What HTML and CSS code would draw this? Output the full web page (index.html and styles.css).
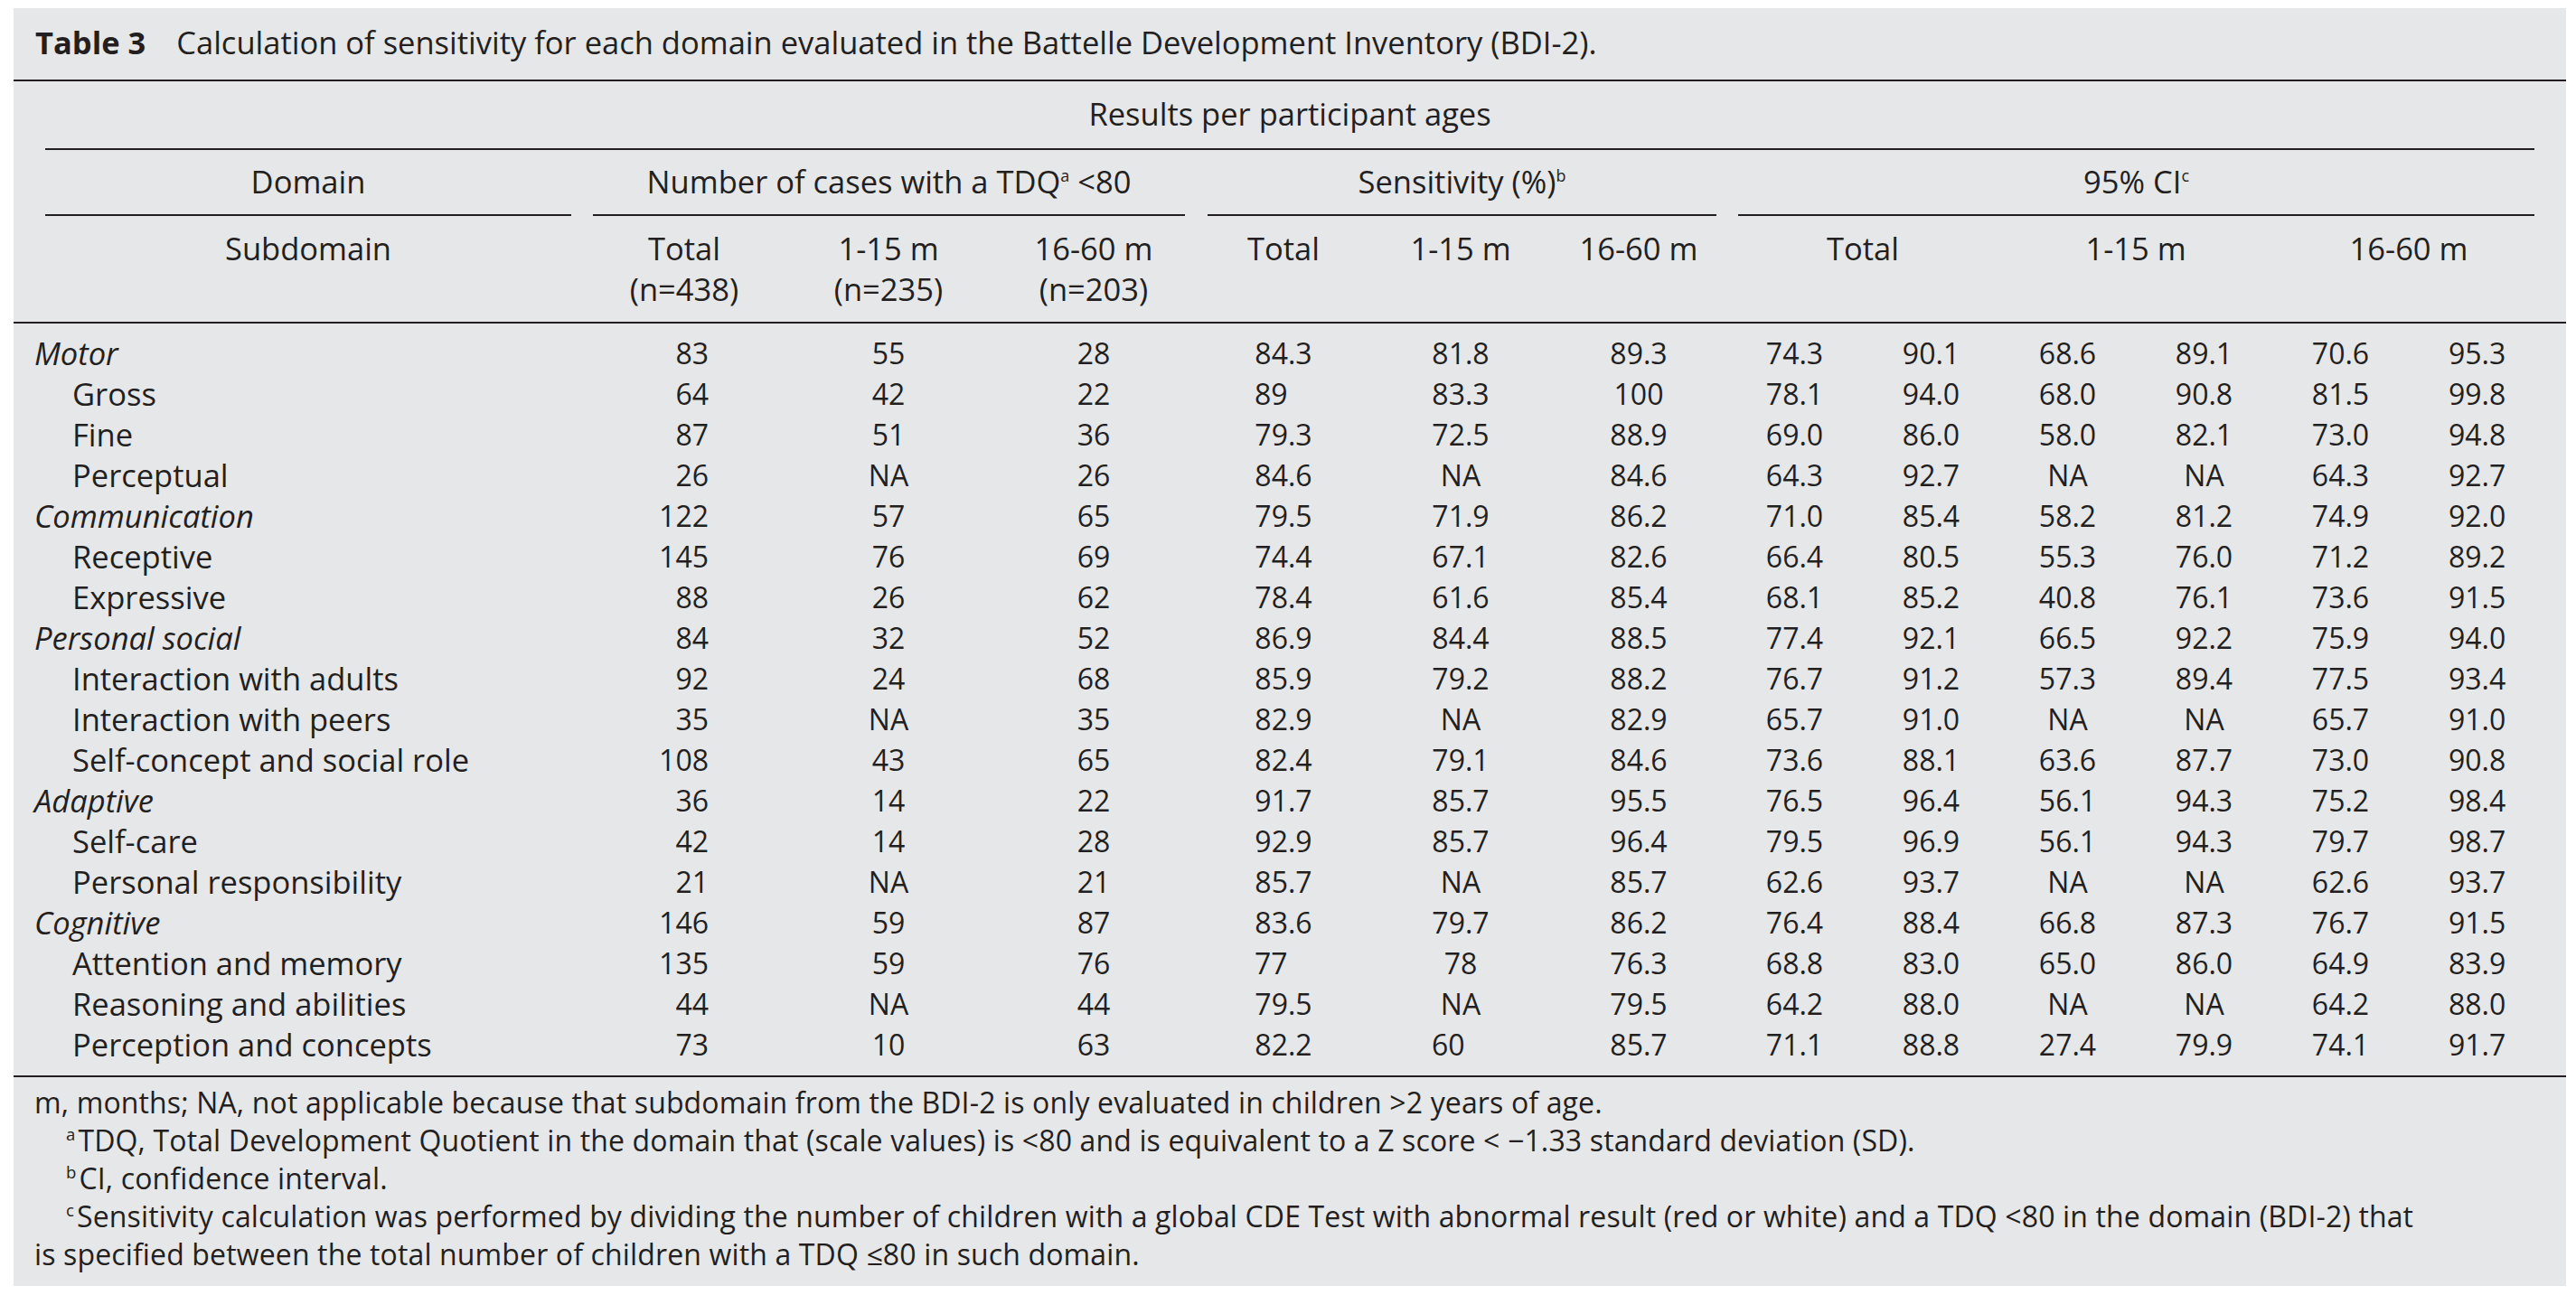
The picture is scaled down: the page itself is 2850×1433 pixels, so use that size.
FILE: index.html
```html
<!DOCTYPE html>
<html lang="en">
<head>
<meta charset="utf-8">
<title>Table 3</title>
<link rel="stylesheet" href="styles.css">
</head>
<body>
<div class="panel">
  <div class="caption"><span class="tlabel">Table 3</span><span class="ttext">Calculation of sensitivity for each domain evaluated in the Battelle Development Inventory (BDI-2).</span></div>
  <table class="tbl">
    <colgroup>
      <col class="w-dom"><col class="w-n1"><col class="w-n2"><col class="w-n3">
      <col class="w-s1"><col class="w-s2"><col class="w-s3">
      <col class="w-ci"><col class="w-ci"><col class="w-ci"><col class="w-ci"><col class="w-ci"><col class="w-ci-last">
    </colgroup>
    <thead>
      <tr class="r-results">
        <th colspan="13"><div class="rule-wide">Results per participant ages</div></th>
      </tr>
      <tr class="r-groups">
        <th><div class="grp g-dom">Domain</div></th>
        <th colspan="3"><div class="grp g-num">Number of cases with a TDQ<sup>a</sup> &lt;80</div></th>
        <th colspan="3"><div class="grp g-sens">Sensitivity (%)<sup>b</sup></div></th>
        <th colspan="6"><div class="grp g-ci">95% CI<sup>c</sup></div></th>
      </tr>
      <tr class="r-sub">
        <th class="h-dom">Subdomain</th>
        <th>Total<br>(n=438)</th>
        <th>1-15 m<br>(n=235)</th>
        <th>16-60 m<br>(n=203)</th>
        <th>Total</th>
        <th>1-15 m</th>
        <th>16-60 m</th>
        <th colspan="2">Total</th>
        <th colspan="2">1-15 m</th>
        <th colspan="2" class="last">16-60 m</th>
      </tr>
    </thead>
    <tbody>
      <tr><td class="dom">Motor</td><td class="nt">83</td><td>55</td><td>28</td><td>84.3</td><td>81.8</td><td>89.3</td><td>74.3</td><td>90.1</td><td>68.6</td><td>89.1</td><td>70.6</td><td class="last">95.3</td></tr>
      <tr><td class="sub">Gross</td><td class="nt">64</td><td>42</td><td>22</td><td class="ls1">89</td><td>83.3</td><td>100</td><td>78.1</td><td>94.0</td><td>68.0</td><td>90.8</td><td>81.5</td><td class="last">99.8</td></tr>
      <tr><td class="sub">Fine</td><td class="nt">87</td><td>51</td><td>36</td><td>79.3</td><td>72.5</td><td>88.9</td><td>69.0</td><td>86.0</td><td>58.0</td><td>82.1</td><td>73.0</td><td class="last">94.8</td></tr>
      <tr><td class="sub">Perceptual</td><td class="nt">26</td><td>NA</td><td>26</td><td>84.6</td><td>NA</td><td>84.6</td><td>64.3</td><td>92.7</td><td>NA</td><td>NA</td><td>64.3</td><td class="last">92.7</td></tr>
      <tr><td class="dom">Communication</td><td class="nt">122</td><td>57</td><td>65</td><td>79.5</td><td>71.9</td><td>86.2</td><td>71.0</td><td>85.4</td><td>58.2</td><td>81.2</td><td>74.9</td><td class="last">92.0</td></tr>
      <tr><td class="sub">Receptive</td><td class="nt">145</td><td>76</td><td>69</td><td>74.4</td><td>67.1</td><td>82.6</td><td>66.4</td><td>80.5</td><td>55.3</td><td>76.0</td><td>71.2</td><td class="last">89.2</td></tr>
      <tr><td class="sub">Expressive</td><td class="nt">88</td><td>26</td><td>62</td><td>78.4</td><td>61.6</td><td>85.4</td><td>68.1</td><td>85.2</td><td>40.8</td><td>76.1</td><td>73.6</td><td class="last">91.5</td></tr>
      <tr><td class="dom">Personal social</td><td class="nt">84</td><td>32</td><td>52</td><td>86.9</td><td>84.4</td><td>88.5</td><td>77.4</td><td>92.1</td><td>66.5</td><td>92.2</td><td>75.9</td><td class="last">94.0</td></tr>
      <tr><td class="sub">Interaction with adults</td><td class="nt">92</td><td>24</td><td>68</td><td>85.9</td><td>79.2</td><td>88.2</td><td>76.7</td><td>91.2</td><td>57.3</td><td>89.4</td><td>77.5</td><td class="last">93.4</td></tr>
      <tr><td class="sub">Interaction with peers</td><td class="nt">35</td><td>NA</td><td>35</td><td>82.9</td><td>NA</td><td>82.9</td><td>65.7</td><td>91.0</td><td>NA</td><td>NA</td><td>65.7</td><td class="last">91.0</td></tr>
      <tr><td class="sub">Self-concept and social role</td><td class="nt">108</td><td>43</td><td>65</td><td>82.4</td><td>79.1</td><td>84.6</td><td>73.6</td><td>88.1</td><td>63.6</td><td>87.7</td><td>73.0</td><td class="last">90.8</td></tr>
      <tr><td class="dom">Adaptive</td><td class="nt">36</td><td>14</td><td>22</td><td>91.7</td><td>85.7</td><td>95.5</td><td>76.5</td><td>96.4</td><td>56.1</td><td>94.3</td><td>75.2</td><td class="last">98.4</td></tr>
      <tr><td class="sub">Self-care</td><td class="nt">42</td><td>14</td><td>28</td><td>92.9</td><td>85.7</td><td>96.4</td><td>79.5</td><td>96.9</td><td>56.1</td><td>94.3</td><td>79.7</td><td class="last">98.7</td></tr>
      <tr><td class="sub">Personal responsibility</td><td class="nt">21</td><td>NA</td><td>21</td><td>85.7</td><td>NA</td><td>85.7</td><td>62.6</td><td>93.7</td><td>NA</td><td>NA</td><td>62.6</td><td class="last">93.7</td></tr>
      <tr><td class="dom">Cognitive</td><td class="nt">146</td><td>59</td><td>87</td><td>83.6</td><td>79.7</td><td>86.2</td><td>76.4</td><td>88.4</td><td>66.8</td><td>87.3</td><td>76.7</td><td class="last">91.5</td></tr>
      <tr><td class="sub">Attention and memory</td><td class="nt">135</td><td>59</td><td>76</td><td class="ls1">77</td><td>78</td><td>76.3</td><td>68.8</td><td>83.0</td><td>65.0</td><td>86.0</td><td>64.9</td><td class="last">83.9</td></tr>
      <tr><td class="sub">Reasoning and abilities</td><td class="nt">44</td><td>NA</td><td>44</td><td>79.5</td><td>NA</td><td>79.5</td><td>64.2</td><td>88.0</td><td>NA</td><td>NA</td><td>64.2</td><td class="last">88.0</td></tr>
      <tr><td class="sub">Perception and concepts</td><td class="nt">73</td><td>10</td><td>63</td><td>82.2</td><td class="ls2">60</td><td>85.7</td><td>71.1</td><td>88.8</td><td>27.4</td><td>79.9</td><td>74.1</td><td class="last">91.7</td></tr>
    </tbody>
  </table>
  <div class="notes">
    <p class="note-main">m, months; NA, not applicable because that subdomain from the BDI-2 is only evaluated in children &gt;2 years of age.</p>
    <p class="note"><sup>a</sup>TDQ, Total Development Quotient in the domain that (scale values) is &lt;80 and is equivalent to a Z score &lt; &minus;1.33 standard deviation (SD).</p>
    <p class="note"><sup>b</sup>CI, confidence interval.</p>
    <p class="note"><sup>c</sup>Sensitivity calculation was performed by dividing the number of children with a global CDE Test with abnormal result (red or white) and a TDQ &lt;80 in the domain (BDI-2) that is specified between the total number of children with a TDQ &le;80 in such domain.</p>
  </div>
</div>
</body>
</html>
```

FILE: styles.css
```css
html, body {
  margin: 0;
  padding: 0;
  background: #ffffff;
}

body {
  font-family: "Open Sans", Lato, "DejaVu Sans", sans-serif;
  font-size: 32px;
  line-height: 45px;
  color: #231f20;
}

.panel {
  margin: 9px 0 0 15px;
  width: 2824px;
  background: #e6e7e9;
}

.caption {
  font-size: 34.5px;
  padding: 15px 24px 19px 24px;
  border-bottom: 2px solid #231f20;
}

.tlabel {
  font-weight: 700;
  margin-right: 34px;
}

.tbl {
  width: 100%;
  table-layout: fixed;
  border-collapse: separate;
  border-spacing: 0;
}

.w-dom { width: 629px; }
.w-n1 { width: 226px; }
.w-n2 { width: 226px; }
.w-n3 { width: 228px; }
.w-s1 { width: 192px; }
.w-s2 { width: 200px; }
.w-s3 { width: 194px; }
.w-ci { width: 151px; }
.w-ci-last { width: 174px; }

th {
  font-size: 34.5px;
  font-weight: 400;
  padding: 0;
  text-align: center;
  vertical-align: top;
}

td {
  padding: 0;
  text-align: center;
  white-space: nowrap;
}

.r-results th {
  padding-top: 13px;
}

.rule-wide {
  margin: 0 35px;
  padding-bottom: 16px;
  border-bottom: 2px solid #231f20;
}

.r-groups th {
  padding-top: 12px;
}

.grp {
  padding-bottom: 14px;
  border-bottom: 2px solid #231f20;
}

.g-dom { margin: 0 12px 0 35px; }
.g-num { margin: 0 13px 0 12px; }
.g-sens { margin: 0 11px 0 12px; }
.g-ci { margin: 0 35px 0 13px; }

.r-sub th {
  padding-top: 13px;
  padding-bottom: 14px;
  border-bottom: 2px solid #231f20;
}

.r-sub th.h-dom {
  padding-left: 35px;
  padding-right: 12px;
}

.r-sub th.last,
td.last {
  padding-right: 23px;
}

sup {
  font-size: 0.52em;
  line-height: 0;
  vertical-align: 0.75em;
}

tbody tr:first-child td {
  padding-top: 10px;
}

tbody tr:last-child td {
  padding-bottom: 12px;
  border-bottom: 2px solid #231f20;
}

td.dom {
  font-size: 34.5px;
  text-align: left;
  font-style: italic;
  padding-left: 23px;
}

td.sub {
  font-size: 34.5px;
  text-align: left;
  padding-left: 65px;
}

td.nt {
  text-align: right;
  padding-right: 86px;
}

td.ls1 {
  text-align: left;
  padding-left: 64px;
}

td.ls2 {
  text-align: left;
  padding-left: 68px;
}

.notes {
  padding: 7px 140px 14px 23px;
  line-height: 42px;
  letter-spacing: 0.14px;
}

.notes p {
  margin: 0;
}

.note {
  text-indent: 35px;
}

.note sup {
  font-size: 0.58em;
  margin-right: 3px;
  vertical-align: 0.65em;
}
```
